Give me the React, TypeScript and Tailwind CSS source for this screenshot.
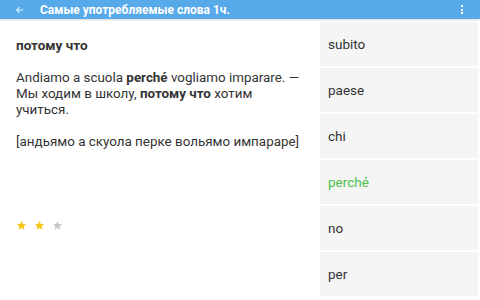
import React from 'react';

const words = ['subito', 'paese', 'chi', 'perché', 'no', 'per'];

function Star({ on }: { on: boolean }) {
    return (
        <svg width="11" height="11" viewBox="0 0 24 24">
            <path
                d="M12 2l2.9 6.9 7.1.6-5.4 4.7 1.7 7.3L12 17.6 5.7 21.5l1.7-7.3L2 9.5l7.1-.6z"
                fill={on ? '#f5c518' : '#c8c8c8'}
            />
        </svg>
    );
}

export default function App() {
    return (
        <div className="w-[480px] h-[300px] overflow-hidden bg-white font-['Roboto','Liberation_Sans',sans-serif] text-[#333]">
            {/* toolbar */}
            <div className="h-[19px] bg-[#57aaea] flex items-center shadow-[0_1px_2px_rgba(0,0,0,0.15)] relative z-10">
                <div className="w-[40px] flex justify-center">
                    <svg width="10" height="10" viewBox="0 0 24 24" fill="none" stroke="#e6f2fc" strokeWidth="2.5">
                        <path d="M20 12H5M11 5l-7 7 7 7" />
                    </svg>
                </div>
                <div className="text-white text-[12px] font-bold">Самые употребляемые слова 1ч.</div>
                <div className="ml-auto w-[36px] flex flex-col items-center gap-[1.5px]">
                    <span className="w-[2px] h-[2px] bg-white" />
                    <span className="w-[2px] h-[2px] bg-white" />
                    <span className="w-[2px] h-[2px] bg-white" />
                </div>
            </div>

            <div className="flex h-[281px]">
                {/* card */}
                <div className="w-[320px] pl-[16px] pr-[14px] pt-[18px] text-[13.4px] leading-[16px]">
                    <div className="font-bold text-[13.5px]">потому что</div>
                    <p className="mt-[17px]">
                        Andiamo a scuola <b>perché</b> vogliamo imparare. — Мы ходим в школу, <b>потому что</b> хотим учиться.
                    </p>
                    <p className="mt-[16px]">[андьямо а скуола перке вольямо импарарe]</p>
                    <div className="flex gap-[7px] mt-[70px]">
                        <Star on />
                        <Star on />
                        <Star on={false} />
                    </div>
                </div>

                {/* answers */}
                <div className="flex-1 pt-[3px] pr-[2px] flex flex-col gap-[2px]">
                    {words.map((w) => (
                        <div
                            key={w}
                            className={`h-[44px] bg-[#f5f5f5] flex items-center pl-[8px] text-[13.5px] ${w === 'perché' ? 'text-[#4cc14c]' : 'text-[#333]'}`}
                        >
                            {w}
                        </div>
                    ))}
                </div>
            </div>
        </div>
    );
}
